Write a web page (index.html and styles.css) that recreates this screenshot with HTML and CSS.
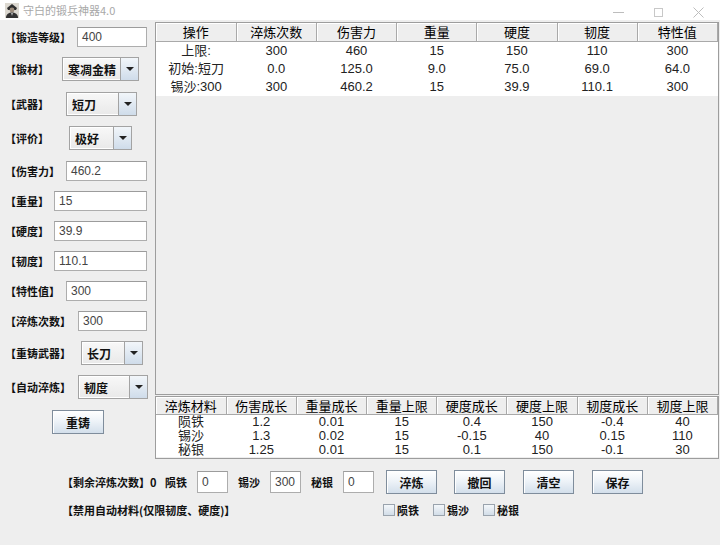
FILE: index.html
```html
<!DOCTYPE html>
<html lang="zh">
<head>
<meta charset="utf-8">
<title>守白的锻兵神器4.0</title>
<link rel="stylesheet" href="styles.css">
</head>
<body>
<div class="window">
  <div class="titlebar">
    <svg class="app-icon" width="14" height="15" viewBox="0 0 14 15">
      <rect width="14" height="15" fill="#dcd8d0"/>
      <path d="M2 5 L7 1 L12 5 L11 7 L3 7 Z" fill="#2e2e2e"/>
      <circle cx="7" cy="7" r="2.4" fill="#9c8c7c"/>
      <path d="M1 15 C1 11 4 9.5 7 9.5 C10 9.5 13 11 13 15 Z" fill="#333"/>
      <path d="M6 10 L7 13 L8 10 Z" fill="#bbb"/>
    </svg>
    <span class="title">守白的锻兵神器4.0</span>
    <div class="wincontrols">
      <div class="wc"><span class="wc-min"></span></div>
      <div class="wc"><span class="wc-max"></span></div>
      <div class="wc">
        <svg width="11" height="11" viewBox="0 0 11 11"><path d="M0.5 0.5 L10.5 10.5 M10.5 0.5 L0.5 10.5" stroke="#bdbdbd" stroke-width="1"/></svg>
      </div>
    </div>
  </div>

  <div class="upper">
    <div class="left">
      <div class="row r30"><div class="line"><span class="lbl lw72">【锻造等级】</span><div class="tf cw70">400</div></div></div>
      <div class="row r35"><div class="line"><span class="lbl lw57">【锻材】</span><div class="cb cw77"><span class="cb-text">寒凋金精</span><span class="cb-btn"><i class="arrow"></i></span></div></div></div>
      <div class="row r34"><div class="line"><span class="lbl lw61">【武器】</span><div class="cb cw71"><span class="cb-text">短刀</span><span class="cb-btn"><i class="arrow"></i></span></div></div></div>
      <div class="row r35"><div class="line"><span class="lbl lw64">【评价】</span><div class="cb cw63"><span class="cb-text">极好</span><span class="cb-btn"><i class="arrow"></i></span></div></div></div>
      <div class="row r30"><div class="line"><span class="lbl lw61">【伤害力】</span><div class="tf cw81">460.2</div></div></div>
      <div class="row r30"><div class="line"><span class="lbl lw49">【重量】</span><div class="tf cw93">15</div></div></div>
      <div class="row r30"><div class="line"><span class="lbl lw49">【硬度】</span><div class="tf cw93">39.9</div></div></div>
      <div class="row r30"><div class="line"><span class="lbl lw49">【韧度】</span><div class="tf cw93">110.1</div></div></div>
      <div class="row r30"><div class="line"><span class="lbl lw61">【特性值】</span><div class="tf cw81">300</div></div></div>
      <div class="row r30"><div class="line"><span class="lbl lw73">【淬炼次数】</span><div class="tf cw69">300</div></div></div>
      <div class="row r34"><div class="line"><span class="lbl lw76">【重铸武器】</span><div class="cb cw62"><span class="cb-text">长刀</span><span class="cb-btn"><i class="arrow"></i></span></div></div></div>
      <div class="row r35"><div class="line"><span class="lbl lw73">【自动淬炼】</span><div class="cb cw70"><span class="cb-text">韧度</span><span class="cb-btn"><i class="arrow"></i></span></div></div></div>
      <div class="row"><button class="btn btn-recast">重铸</button></div>
    </div>

    <div class="right">
      <div class="pane pane-top">
        <table class="grid grid-top">
          <thead>
            <tr><th>操作</th><th>淬炼次数</th><th>伤害力</th><th>重量</th><th>硬度</th><th>韧度</th><th>特性值</th></tr>
          </thead>
          <tbody>
            <tr><td>上限:</td><td>300</td><td>460</td><td>15</td><td>150</td><td>110</td><td>300</td></tr>
            <tr><td>初始:短刀</td><td>0.0</td><td>125.0</td><td>9.0</td><td>75.0</td><td>69.0</td><td>64.0</td></tr>
            <tr><td>锡沙:300</td><td>300</td><td>460.2</td><td>15</td><td>39.9</td><td>110.1</td><td>300</td></tr>
          </tbody>
        </table>
      </div>
      <div class="pane pane-bottom">
        <table class="grid grid-bottom">
          <thead>
            <tr><th>淬炼材料</th><th>伤害成长</th><th>重量成长</th><th>重量上限</th><th>硬度成长</th><th>硬度上限</th><th>韧度成长</th><th>韧度上限</th></tr>
          </thead>
          <tbody>
            <tr><td>陨铁</td><td>1.2</td><td>0.01</td><td>15</td><td>0.4</td><td>150</td><td>-0.4</td><td>40</td></tr>
            <tr><td>锡沙</td><td>1.3</td><td>0.02</td><td>15</td><td>-0.15</td><td>40</td><td>0.15</td><td>110</td></tr>
            <tr><td>秘银</td><td>1.25</td><td>0.01</td><td>15</td><td>0.1</td><td>150</td><td>-0.1</td><td>30</td></tr>
          </tbody>
        </table>
      </div>
    </div>
  </div>

  <div class="bottom">
    <div class="brow brow-1">
      <span class="lbl bl-main">【剩余淬炼次数】0</span>
      <span class="lbl bl-mat">陨铁</span>
      <div class="tf tf-small">0</div>
      <span class="lbl bl-mat gap10">锡沙</span>
      <div class="tf tf-small">300</div>
      <span class="lbl bl-mat gap10">秘银</span>
      <div class="tf tf-small">0</div>
      <button class="btn btn-act first">淬炼</button>
      <button class="btn btn-act gap17">撤回</button>
      <button class="btn btn-act gap18">清空</button>
      <button class="btn btn-act gap18">保存</button>
    </div>
    <div class="brow brow-2">
      <span class="lbl bl-ban">【禁用自动材料(仅限韧度、硬度)】</span>
      <label class="chk"><span class="box"></span><span class="lbl">陨铁</span></label>
      <label class="chk"><span class="box"></span><span class="lbl">锡沙</span></label>
      <label class="chk"><span class="box"></span><span class="lbl">秘银</span></label>
    </div>
  </div>
</div>
</body>
</html>
```

FILE: styles.css
```css
* { box-sizing: border-box; }
html, body { margin: 0; padding: 0; }
body {
  width: 720px;
  height: 545px;
  overflow: hidden;
  background: #eeeeee;
  font-family: "Noto Sans CJK SC", sans-serif;
}
.window { width: 720px; height: 545px; background: #eeeeee; }

/* title bar */
.titlebar {
  height: 20px;
  background: #ffffff;
  display: flex;
  align-items: center;
}
.app-icon { margin-left: 5px; flex: none; }
.title {
  margin-left: 4px;
  font-size: 11px;
  color: #a8a8a8;
  line-height: 20px;
}
.wincontrols { margin-left: auto; margin-right: 2px; display: flex; align-items: center; height: 20px; margin-top: 4px; }
.wc { width: 40px; height: 20px; display: flex; align-items: center; justify-content: center; }
.wc-min { width: 11px; height: 1px; background: #bdbdbd; }
.wc-max { width: 9px; height: 9px; border: 1px solid #c8c8c8; }

/* upper area */
.upper { display: flex; height: 439px; }
.left { width: 155px; flex: none; padding-top: 7px; padding-left: 5px; }
.row { display: flex; align-items: flex-start; }
.r30 { height: 30px; }
.r34 { height: 34px; }
.r35 { height: 35px; }
.line { display: flex; align-items: center; }

.lbl {
  font-size: 11px;
  font-weight: bold;
  color: #111;
  white-space: nowrap;
  flex: none;
}
.lw49 { width: 49px; }
.lw57 { width: 57px; }
.lw61 { width: 61px; }
.lw64 { width: 64px; }
.lw72 { width: 72px; }
.lw73 { width: 73px; }
.lw76 { width: 76px; }

.cw62 { width: 62px; }
.cw63 { width: 63px; }
.cw69 { width: 69px; }
.cw70 { width: 70px; }
.cw71 { width: 71px; }
.cw77 { width: 77px; }
.cw81 { width: 81px; }
.cw93 { width: 93px; }

/* text field */
.tf {
  height: 20px;
  background: #ffffff;
  border: 1px solid #adadad;
  border-top-color: #9c9c9c;
  font-family: "Liberation Sans", sans-serif;
  font-size: 12px;
  color: #444;
  padding-left: 4px;
  display: flex;
  align-items: center;
  flex: none;
}

/* combo box */
.cb {
  height: 24px;
  border: 1px solid #a3a3a3;
  background: linear-gradient(#f8f8f8, #e9e9e9);
  display: flex;
  flex: none;
}
.cb-text {
  flex: 1;
  font-size: 12px;
  font-weight: bold;
  color: #111;
  padding-left: 4px;
  line-height: 22px;
  border: 1px solid #ffffff;
  border-right: none;
}
.cb-btn {
  width: 18px;
  flex: none;
  border-left: 1px solid #a3a3a3;
  background: linear-gradient(#f2f6fa, #cfdcea);
  display: flex;
  align-items: center;
  justify-content: center;
}
.arrow {
  width: 0;
  height: 0;
  border-left: 4px solid transparent;
  border-right: 4px solid transparent;
  border-top: 4px solid #222;
}

/* buttons */
.btn {
  height: 24px;
  padding: 0;
  border: 1px solid #7f8d9c;
  border-radius: 0;
  background: linear-gradient(#ffffff 0%, #eef3f8 45%, #d3dfeb 100%);
  box-shadow: inset 1px 1px 0 #ffffff;
  font-family: "Noto Sans CJK SC", sans-serif;
  font-size: 12px;
  font-weight: bold;
  color: #111;
  flex: none;
}
.btn-recast { width: 52px; margin-left: 47px; }

/* right panes */
.right { width: 564px; flex: none; padding-top: 2px; }
.pane {
  border: 1px solid #9d9d9d;
  background: #eeeeee;
  overflow: hidden;
}
.pane-top { height: 373px; }
.pane-bottom { height: 63px; margin-top: 1px; }

.grid {
  width: 100%;
  border-collapse: collapse;
  table-layout: fixed;
  background: #ffffff;
  font-family: "Liberation Sans", "Noto Sans CJK SC", sans-serif;
  font-size: 13px;
}
.grid th {
  font-weight: normal;
  color: #000;
  background: #eeeeee;
  border-right: 1px solid #a9a9a9;
  border-bottom: 1px solid #a9a9a9;
  box-shadow: inset 1px 1px 0 #ffffff;
  padding: 0;
  text-align: center;
  font-family: "Noto Sans CJK SC", sans-serif;
}
.grid td {
  padding: 0;
  text-align: center;
  color: #222;
  white-space: nowrap;
}
.grid-top th { height: 18px; line-height: 16px; }
.grid-top td { height: 18px; line-height: 18px; }
.grid-bottom th { height: 17px; line-height: 15px; }
.grid-bottom td { height: 14px; line-height: 14px; }

/* bottom controls */
.bottom { padding-top: 11px; padding-left: 62px; }
.brow { display: flex; align-items: center; }
.brow-1 { height: 24px; }
.brow-2 { height: 14px; margin-top: 9px; }
.bl-main { width: 103px; }
.bl-mat { width: 32px; }
.gap10 { margin-left: 10px; }
.tf-small { width: 31px; height: 22px; }
.btn-act { width: 51px; }
.btn-act.first { margin-left: 12px; }
.gap17 { margin-left: 17px; }
.gap18 { margin-left: 18px; }
.bl-ban { width: 321px; }
.chk { display: flex; align-items: center; margin-right: 13px; }
.chk .box {
  width: 12px;
  height: 12px;
  border: 1px solid #9aa3ad;
  background: linear-gradient(#f4f7fa, #d2dde8);
  margin-right: 2px;
  flex: none;
}
.chk .lbl { width: 23px; }
```
